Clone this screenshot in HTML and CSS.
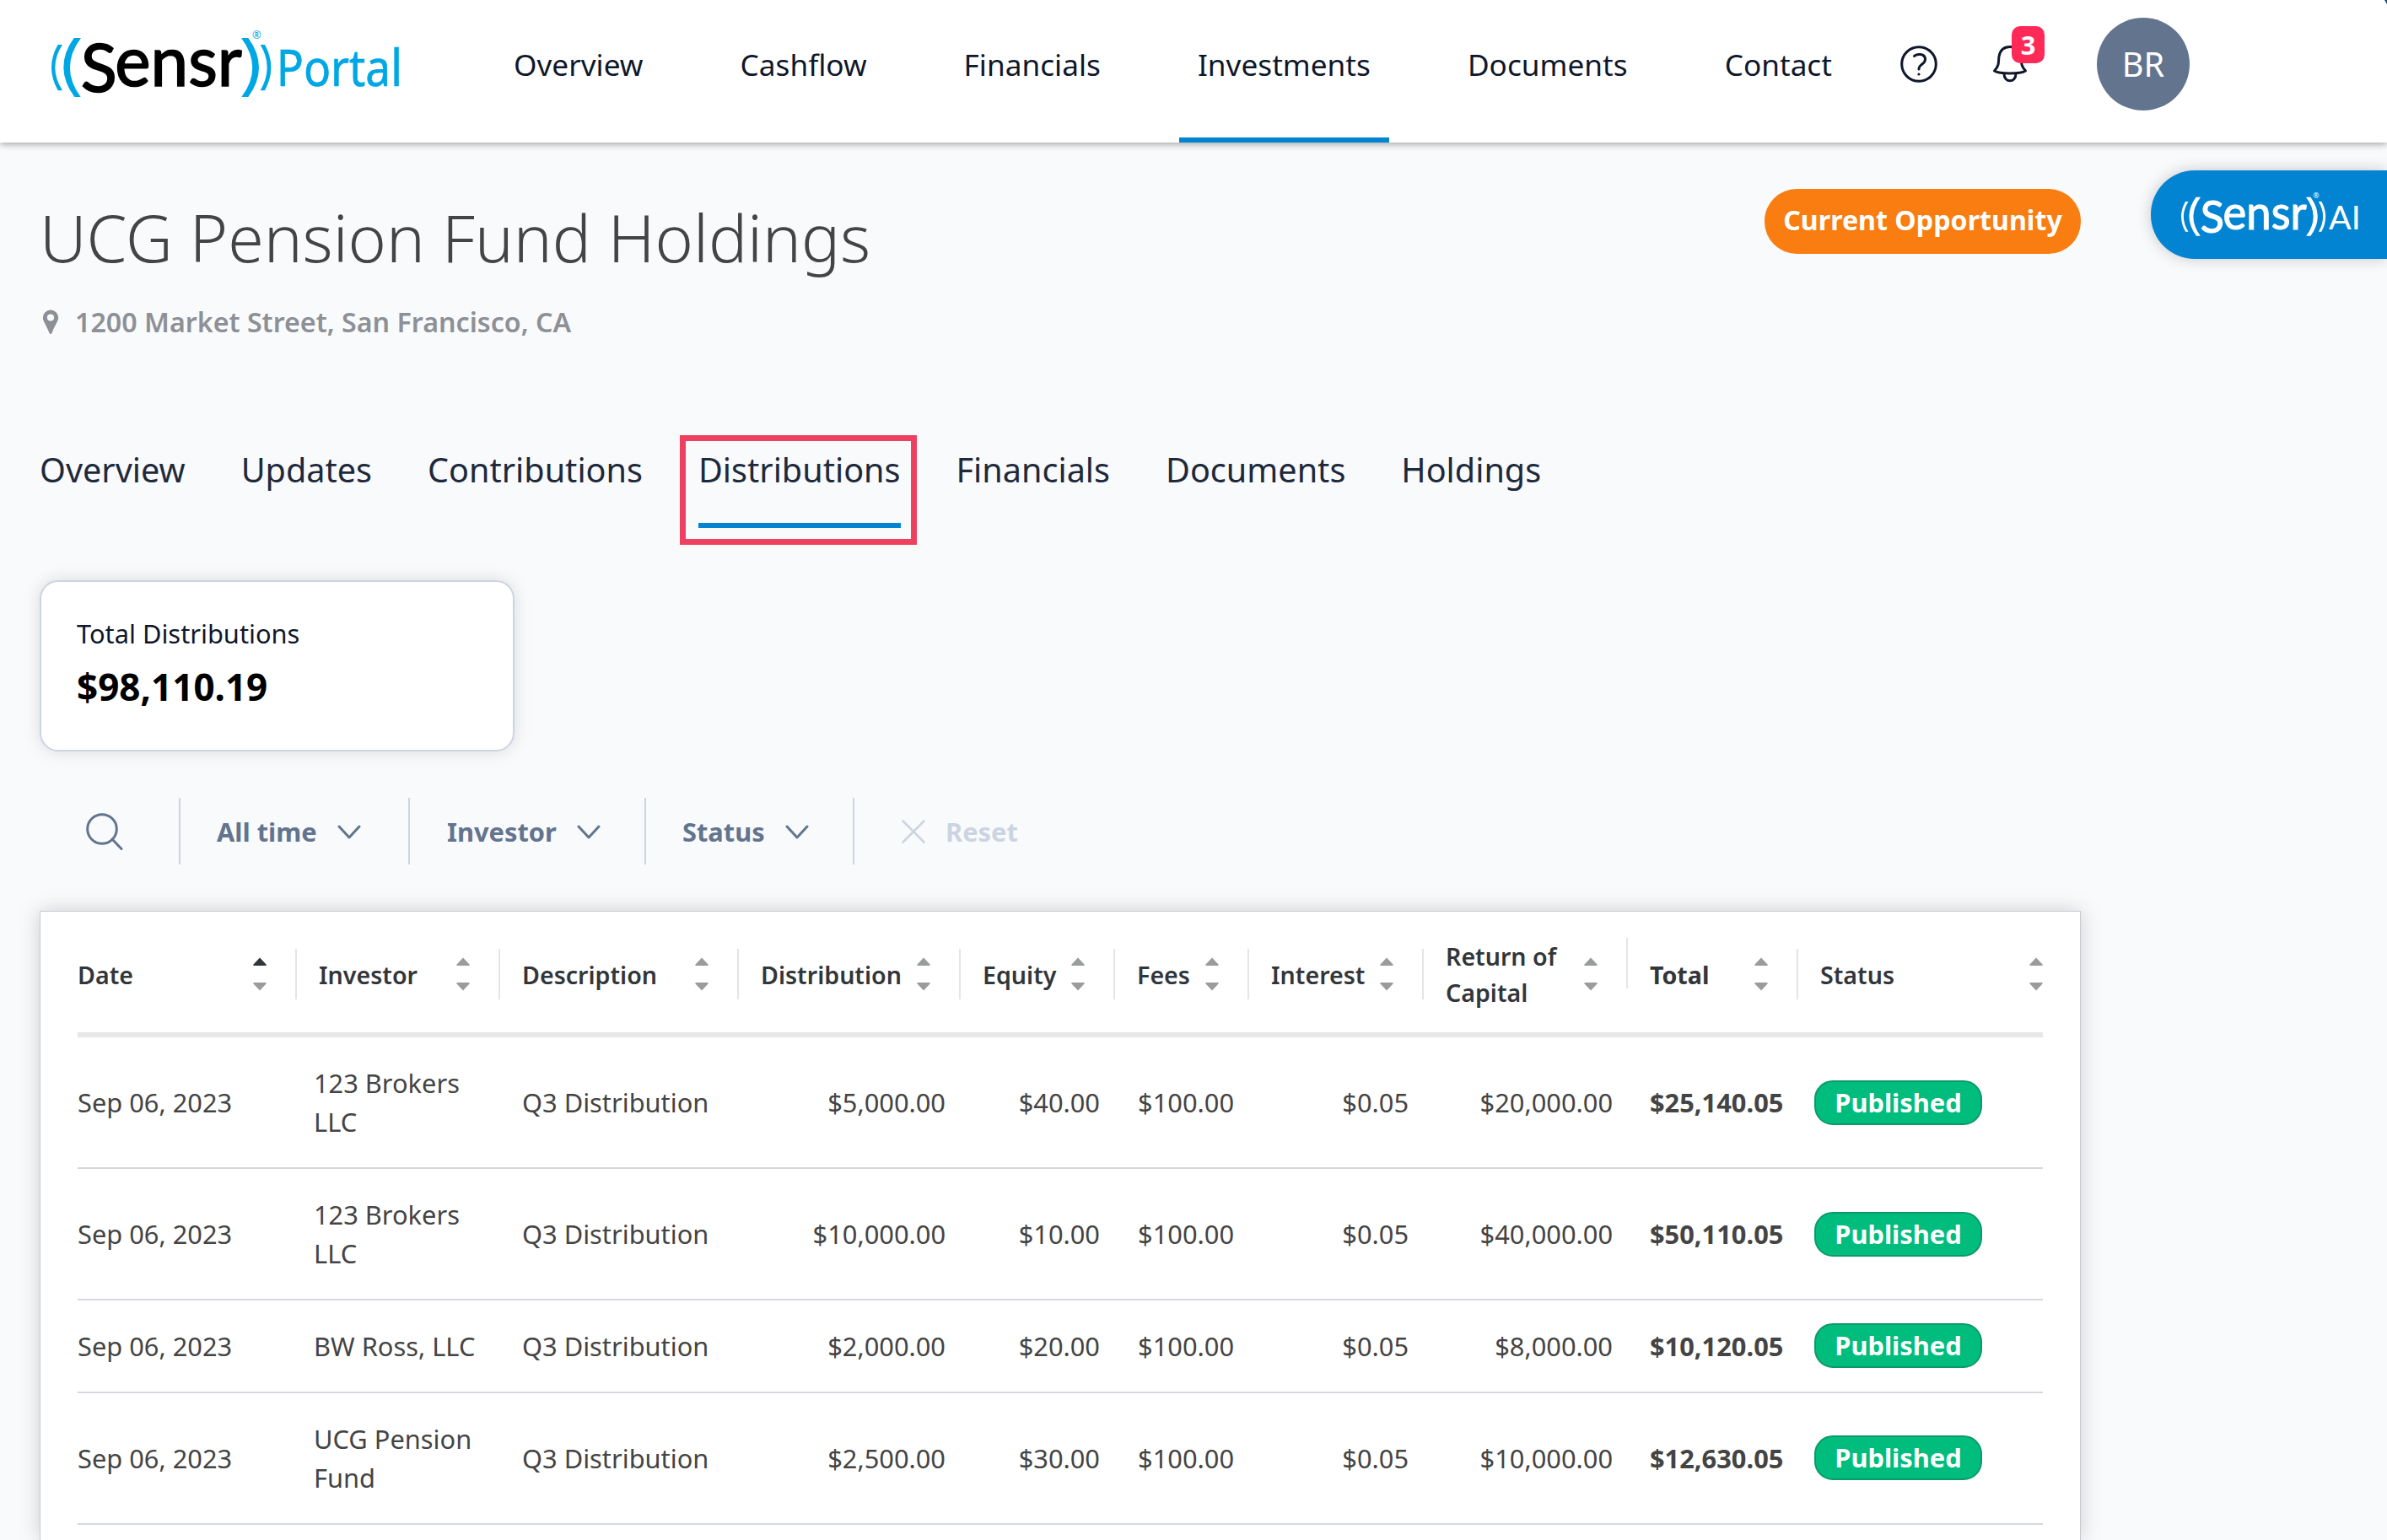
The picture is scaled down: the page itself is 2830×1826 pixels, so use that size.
FILE: index.html
```html
<!DOCTYPE html>
<html lang="en">
<head>
    <meta charset="UTF-8">
    <meta name="viewport" content="width=device-width, initial-scale=1.0">
    <title>UCG Pension Fund Holdings - Distributions</title>
    <link rel="stylesheet" href="styles.css">
</head>
<body>

<!-- Shared icons -->
<svg class="icon-defs" width="0" height="0">
    <symbol id="sensr-mark" viewBox="0 0 840 330">
        <g class="mark-waves">
            <path d="M113 60Q38 165 115 270H137Q60 165 138 60Z"/>
            <path d="M56 84Q10 164 56 247H72Q20 164 72 84Z"/>
            <path d="M708 60Q787 165 709 270H733Q809 165 733 60Z"/>
            <path d="M776 84Q824 164 776 247H792Q836 164 792 84Z"/>
            <text x="747" y="64" font-size="38" textLength="32" lengthAdjust="spacingAndGlyphs">®</text>
        </g>
        <g class="mark-name">
            <text x="137" y="252" font-size="240" textLength="129" lengthAdjust="spacingAndGlyphs">S</text>
            <text x="259" y="232" font-size="252" textLength="452" lengthAdjust="spacingAndGlyphs">ensr</text>
        </g>
    </symbol>
    <symbol id="chevron" viewBox="0 0 28 18">
        <path d="M2 2L14 15L26 2" fill="none" stroke="currentColor" stroke-width="3" stroke-linecap="round" stroke-linejoin="round"/>
    </symbol>
    <symbol id="sort" viewBox="0 0 16 40">
        <path class="up" d="M8 0.5L15.5 8.5Q16 10 15 10H1Q0 10 0.5 8.5Z"/>
        <path class="down" d="M8 39.5L15.5 31.5Q16 30 15 30H1Q0 30 0.5 31.5Z"/>
    </symbol>
</svg>

<header class="header">
    <svg class="logo" viewBox="0 0 1320 330">
        <use href="#sensr-mark" x="0" y="0" width="840" height="330"/>
        <text class="logo-portal" x="833" y="232" font-size="182" textLength="448" lengthAdjust="spacingAndGlyphs">Portal</text>
    </svg>

    <nav class="nav">
        <a>Overview</a>
        <a>Cashflow</a>
        <a>Financials</a>
        <a class="active">Investments</a>
        <a>Documents</a>
        <a>Contact</a>
    </nav>

    <svg class="help" viewBox="0 0 44 44">
        <circle cx="22" cy="22" r="20.3"/>
        <path d="M16.5 12.5C19 9.5 29.5 9 29.5 16.5C29.5 22.5 22 21.5 22 28"/>
        <circle class="dot" cx="22" cy="34" r="1.6"/>
    </svg>

    <div class="bell">
        <svg viewBox="0 0 40 44">
            <path d="M1.5 30C8 23 6 19 7 13C8.500 4.500 14 1.500 20 1.500S31.500 4.500 33 13C34 19 32 23 38.500 30C32 34 8 34 1.500 30Z"/>
            <path d="M13 33.500C13 44.500 27 44.500 27 33.500"/>
        </svg>
        <span class="count">3</span>
    </div>

    <div class="avatar">BR</div>
</header>

<button class="ai-button">
    <svg viewBox="0 0 840 315">
        <use href="#sensr-mark" x="86" y="56" width="553" height="217"/>
        <text x="633" y="210" font-size="117" textLength="113" lengthAdjust="spacingAndGlyphs">AI</text>
    </svg>
</button>

<main class="main">
    <div class="title-row">
        <div>
            <h1>UCG Pension Fund Holdings</h1>
            <div class="address">
                <svg viewBox="0 0 20 30">
                    <path fill-rule="evenodd" d="M10 0.500A9.200 9.200 0 0 0 0.800 9.700C0.800 14 6 20 8.500 28Q10 30 11.500 28C14 20 19.200 14 19.200 9.700A9.200 9.200 0 0 0 10 0.500ZM10 5.500A4 4 0 0 1 10 13.700A4 4 0 0 1 10 5.500Z"/>
                </svg>
                <span>1200 Market Street, San Francisco, CA</span>
            </div>
        </div>
        <span class="opportunity">Current Opportunity</span>
    </div>

    <div class="tabs">
        <a>Overview</a>
        <a>Updates</a>
        <a>Contributions</a>
        <a class="active">Distributions</a>
        <a>Financials</a>
        <a>Documents</a>
        <a>Holdings</a>
    </div>

    <div class="summary">
        <div class="summary-label">Total Distributions</div>
        <div class="summary-value">$98,110.19</div>
    </div>

    <div class="filters">
        <div class="search">
            <svg viewBox="0 0 44 44">
                <circle cx="19" cy="19" r="17.300"/>
                <path d="M31 31L42 42.500"/>
            </svg>
        </div>
        <div class="filter filter-time">All time <svg class="chevron"><use href="#chevron"/></svg></div>
        <div class="filter filter-investor">Investor <svg class="chevron"><use href="#chevron"/></svg></div>
        <div class="filter filter-status">Status <svg class="chevron"><use href="#chevron"/></svg></div>
        <div class="filter reset">
            <svg viewBox="0 0 28 28"><path d="M1.500 1.500L26.500 26.500M26.500 1.500L1.500 26.500"/></svg>
            Reset
        </div>
    </div>

    <div class="table-card">
        <table>
            <colgroup>
                <col class="c-date"><col class="c-investor"><col class="c-description"><col class="c-distribution"><col class="c-equity">
                <col class="c-fees"><col class="c-interest"><col class="c-return"><col class="c-total"><col class="c-status">
            </colgroup>
            <thead>
                <tr>
                    <th><div class="head">Date <svg class="sort sorted"><use href="#sort"/></svg></div></th>
                    <th><div class="head"><i></i>Investor <svg class="sort"><use href="#sort"/></svg></div></th>
                    <th><div class="head"><i></i>Description <svg class="sort"><use href="#sort"/></svg></div></th>
                    <th><div class="head"><i></i>Distribution <svg class="sort"><use href="#sort"/></svg></div></th>
                    <th><div class="head"><i></i>Equity <svg class="sort"><use href="#sort"/></svg></div></th>
                    <th><div class="head"><i></i>Fees <svg class="sort"><use href="#sort"/></svg></div></th>
                    <th><div class="head"><i></i>Interest <svg class="sort"><use href="#sort"/></svg></div></th>
                    <th><div class="head"><i></i><span>Return of<br>Capital</span> <svg class="sort"><use href="#sort"/></svg></div></th>
                    <th class="total"><div class="head"><i></i>Total <svg class="sort"><use href="#sort"/></svg></div></th>
                    <th><div class="head"><i></i>Status <svg class="sort"><use href="#sort"/></svg></div></th>
                </tr>
            </thead>
            <tbody>
                <tr>
                    <td>Sep 06, 2023</td>
                    <td>123 Brokers LLC</td>
                    <td>Q3 Distribution</td>
                    <td>$5,000.00</td>
                    <td>$40.00</td>
                    <td>$100.00</td>
                    <td>$0.05</td>
                    <td>$20,000.00</td>
                    <td>$25,140.05</td>
                    <td><span class="badge">Published</span></td>
                </tr>
                <tr>
                    <td>Sep 06, 2023</td>
                    <td>123 Brokers LLC</td>
                    <td>Q3 Distribution</td>
                    <td>$10,000.00</td>
                    <td>$10.00</td>
                    <td>$100.00</td>
                    <td>$0.05</td>
                    <td>$40,000.00</td>
                    <td>$50,110.05</td>
                    <td><span class="badge">Published</span></td>
                </tr>
                <tr>
                    <td>Sep 06, 2023</td>
                    <td>BW Ross, LLC</td>
                    <td>Q3 Distribution</td>
                    <td>$2,000.00</td>
                    <td>$20.00</td>
                    <td>$100.00</td>
                    <td>$0.05</td>
                    <td>$8,000.00</td>
                    <td>$10,120.05</td>
                    <td><span class="badge">Published</span></td>
                </tr>
                <tr>
                    <td>Sep 06, 2023</td>
                    <td>UCG Pension Fund</td>
                    <td>Q3 Distribution</td>
                    <td>$2,500.00</td>
                    <td>$30.00</td>
                    <td>$100.00</td>
                    <td>$0.05</td>
                    <td>$10,000.00</td>
                    <td>$12,630.05</td>
                    <td><span class="badge">Published</span></td>
                </tr>
            </tbody>
        </table>
    </div>
</main>

</body>
</html>
```
FILE: styles.css
```css
* {
    box-sizing: border-box;
}
body {
    margin: 0;
    height: 100vh;
    overflow: hidden;
    background-color: #f9fafc;
    color: #444;
    font-family: "Noto Sans", sans-serif;
    font-size: 30.8px;
}
svg {
    display: block;
    flex: none;
    overflow: visible;
}
.icon-defs {
    position: absolute;
}
#sensr-mark {
    overflow: visible;
}

/* Header */
.header {
    position: relative;
    z-index: 2;
    display: flex;
    height: 169px;
    padding-left: 50px;
    background-color: #fff;
    box-shadow: 0 2px 8px rgba(0, 0, 0, 0.35);
}
.header::after {
    content: "";
    position: absolute;
    top: 0;
    right: 0;
    width: 3px;
    height: 5px;
    background-color: #1f4a6e;
    clip-path: polygon(0 0, 100% 0, 100% 100%);
}
.logo {
    width: 440px;
    height: 110px;
    margin-top: 25px;
    color: #000;
}
.mark-waves {
    fill: var(--waves, #00a7e5);
    font-family: "Noto Sans", sans-serif;
}
.mark-name {
    fill: currentColor;
    stroke: currentColor;
    stroke-width: 5;
    font-family: Lato, sans-serif;
}
.logo-portal {
    fill: #00a7e5;
    stroke: #00a7e5;
    stroke-width: 2;
    font-family: "Noto Sans", sans-serif;
}
.nav {
    display: flex;
    justify-content: space-between;
    width: 1607px;
    margin-left: 97px;
    font-size: 35.2px;
    color: #0f172a;
}
.nav a {
    height: 169px;
    padding: 0 22px;
    line-height: 153px;
}
.nav .active {
    border-bottom: 6px solid #0284d3;
}
.help {
    width: 44px;
    height: 44px;
    margin: 54px 0 0 59px;
    fill: none;
    stroke: #0f172a;
    stroke-width: 3;
    stroke-linecap: round;
}
.help .dot {
    fill: #0f172a;
    stroke: none;
}
.bell {
    position: relative;
    margin: 54px 0 0 66px;
}
.bell svg {
    width: 40px;
    height: 44px;
    fill: none;
    stroke: #0f172a;
    stroke-width: 3;
    stroke-linejoin: round;
}
.count {
    position: absolute;
    left: 22px;
    top: -23px;
    width: 39px;
    height: 44px;
    border-radius: 10px;
    background-color: #ff2a58;
    color: #fff;
    font-weight: 700;
    line-height: 45px;
    text-align: center;
}
.avatar {
    width: 110px;
    height: 110px;
    margin: 21px 0 0 83px;
    border-radius: 50%;
    background-color: #62748e;
    color: #fff;
    font-size: 39.6px;
    line-height: 110px;
    text-align: center;
}

/* Floating assistant button */
.ai-button {
    position: absolute;
    z-index: 1;
    top: 202px;
    right: 0;
    width: 280px;
    height: 105px;
    padding: 0;
    border: 0;
    border-radius: 52px 0 0 52px;
    background-color: #0284d3;
    box-shadow: 0 0 18px rgba(0, 0, 0, 0.2);
    color: #fff;
    --waves: #fff;
}
.ai-button svg {
    width: 280px;
    height: 105px;
    fill: #fff;
    font-family: Lato, sans-serif;
}

/* Page */
.main {
    width: 2467px;
    padding: 55px 0 0 47px;
}
.title-row {
    display: flex;
    justify-content: space-between;
    align-items: flex-start;
}
h1 {
    margin: 8px 0 27px;
    font-size: 77px;
    font-weight: 300;
    line-height: 100px;
    color: #444;
}
.address {
    display: flex;
    align-items: center;
    gap: 19px;
    padding-left: 3px;
    font-size: 32.2px;
    font-weight: 600;
    line-height: 46px;
    color: #8d9096;
}
.address svg {
    width: 20px;
    height: 30px;
    fill: #8d9096;
}
.opportunity {
    width: 375px;
    height: 77px;
    border-radius: 38px;
    background-color: #f97d10;
    color: #fff;
    font-size: 32.2px;
    font-weight: 700;
    line-height: 74px;
    text-align: center;
}
.tabs {
    display: flex;
    gap: 66px;
    margin-top: 122px;
    font-size: 39.6px;
    color: #1e293b;
}
.tabs a {
    height: 99px;
    line-height: 60px;
}
.tabs .active {
    position: relative;
    border-bottom: 6px solid #0284d3;
}
.tabs .active::after {
    content: "";
    box-sizing: border-box;
    position: absolute;
    top: -11px;
    left: -22px;
    width: 281px;
    height: 130px;
    border: 7px solid #ee4060;
}
.summary {
    width: 563px;
    height: 203px;
    margin-top: 62px;
    padding: 38px 42px;
    border: 2px solid #cbd5e1;
    border-radius: 22px;
    background-color: #fff;
    box-shadow: 0 0 20px rgba(0, 0, 0, 0.13);
}
.summary-label {
    line-height: 46px;
    color: #0f172a;
}
.summary-value {
    margin-top: 10px;
    font-size: 44px;
    font-weight: 700;
    line-height: 60px;
    color: #000;
}

/* Filters */
.filters {
    display: flex;
    height: 79px;
    margin: 55px 0;
    font-weight: 700;
    color: #62748e;
}
.search {
    width: 165px;
    padding: 18px 0 0 55px;
}
.search svg {
    width: 44px;
    height: 44px;
    fill: none;
    stroke: #62748e;
    stroke-width: 3;
    stroke-linecap: round;
}
.filter {
    display: flex;
    align-items: center;
    gap: 24px;
    padding-left: 43px;
    border-left: 2px solid #cbd5e1;
}
.filter-time {
    width: 272px;
}
.filter-investor {
    width: 280px;
    padding-left: 44px;
}
.filter-status {
    width: 247px;
}
.chevron {
    width: 28px;
    height: 18px;
    margin-top: 3px;
}
.reset {
    padding-left: 56px;
    color: #cbd5e1;
}
.reset svg {
    width: 28px;
    height: 28px;
    stroke: #cbd5e1;
    stroke-width: 2.6;
    stroke-linecap: round;
}

/* Distributions table */
.table-card {
    height: 746px;
    padding: 31px 44px 0;
    border: 1px solid #c6cad0;
    border-bottom: 0;
    background-color: #fff;
    box-shadow: 0 0 24px rgba(0, 0, 0, 0.18);
}
table {
    width: 2330px;
    table-layout: fixed;
    border-collapse: separate;
    border-spacing: 0;
}
.c-date { width: 258px; }
.c-investor { width: 241px; }
.c-description { width: 283px; }
.c-distribution { width: 263px; }
.c-equity { width: 183px; }
.c-fees { width: 159px; }
.c-interest { width: 207px; }
.c-return { width: 242px; }
.c-total { width: 202px; }
.c-status { width: 292px; }
th {
    padding: 0 0 26px;
    border-bottom: 6px solid #e7e7e7;
    text-align: left;
    font-size: 28.6px;
    font-weight: 600;
    line-height: 43px;
    color: #32363a;
}
.head {
    display: flex;
    align-items: center;
    height: 86px;
    padding-right: 34px;
    white-space: nowrap;
}
.head i {
    width: 2px;
    height: 60px;
    margin-right: 26px;
    background-color: #e5e5e5;
}
th:last-child .head {
    padding-right: 0;
}
.total {
    font-weight: 700;
}
.total i {
    margin-bottom: 26px;
}
.sort {
    width: 16px;
    height: 40px;
    margin-left: auto;
    fill: #9a9b9c;
}
.sorted {
    --up: #32363a;
}
.up {
    fill: var(--up, #9a9b9c);
}
td {
    padding: 30.8px 16px 30.8px 28px;
    border-bottom: 2px solid #d5d9de;
    line-height: 46.2px;
    text-align: right;
}
td:first-child {
    padding-left: 0;
}
td:nth-child(-n+3) {
    text-align: left;
}
td:nth-child(2) {
    padding-left: 22px;
}
td:nth-child(9) {
    font-weight: 700;
    white-space: nowrap;
}
td:last-child {
    padding: 0 0 0 21px;
    text-align: left;
}
.badge {
    display: block;
    width: 199px;
    height: 53px;
    border: 2px solid #0a9a68;
    border-radius: 22px;
    background-color: #00bd7e;
    color: #fff;
    font-weight: 700;
    line-height: 49px;
    text-align: center;
}
```
